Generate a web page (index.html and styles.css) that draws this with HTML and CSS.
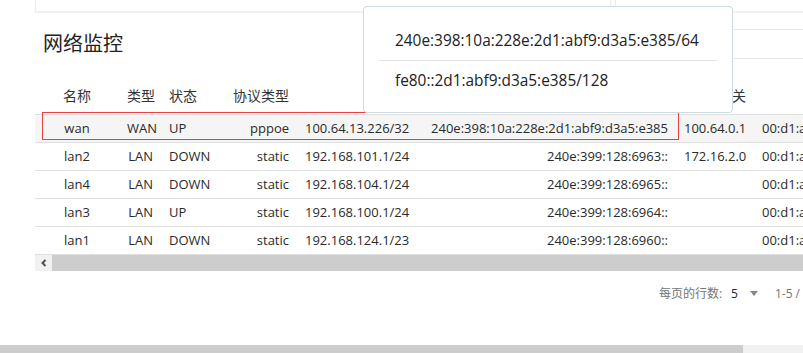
FILE: index.html
```html
<!DOCTYPE html>
<html lang="zh-CN">
<head>
    <meta charset="UTF-8">
    <meta name="viewport" content="width=device-width, initial-scale=1.0">
    <title>网络监控</title>
    <link rel="stylesheet" href="styles.css">
</head>
<body>
    <div class="page">
        <div class="top-cards">
            <div class="top-card top-card-main"></div>
            <div class="top-card top-card-side"></div>
        </div>

        <section class="panel">
            <div class="panel-head">
                <h2 class="panel-title">网络监控</h2>
                <div class="panel-tools"></div>
            </div>

            <div class="table-wrap">
                <table class="net-table">
                    <colgroup>
                        <col style="width:84px">
                        <col style="width:42px">
                        <col style="width:64px">
                        <col style="width:72px">
                        <col style="width:123px">
                        <col style="width:256px">
                        <col style="width:78px">
                        <col style="width:140px">
                    </colgroup>
                    <thead>
                        <tr>
                            <th class="c-center">名称</th>
                            <th class="c-right">类型</th>
                            <th class="c-left">状态</th>
                            <th class="c-right">协议类型</th>
                            <th class="c-right">IPv4</th>
                            <th class="c-right">IPv6</th>
                            <th class="c-right">网关</th>
                            <th class="c-right">MAC</th>
                        </tr>
                    </thead>
                    <tbody>
                        <tr class="is-hover">
                            <td class="c-center">wan</td>
                            <td class="c-right">WAN</td>
                            <td class="c-left">UP</td>
                            <td class="c-right">pppoe</td>
                            <td class="c-left">100.64.13.226/32</td>
                            <td class="c-right">240e:398:10a:228e:2d1:abf9:d3a5:e385</td>
                            <td class="c-right">100.64.0.1</td>
                            <td class="c-left">00:d1:a3:6e:12:04</td>
                        </tr>
                        <tr>
                            <td class="c-center">lan2</td>
                            <td class="c-right">LAN</td>
                            <td class="c-left">DOWN</td>
                            <td class="c-right">static</td>
                            <td class="c-left">192.168.101.1/24</td>
                            <td class="c-right">240e:399:128:6963::</td>
                            <td class="c-right">172.16.2.0</td>
                            <td class="c-left">00:d1:a3:6e:12:05</td>
                        </tr>
                        <tr>
                            <td class="c-center">lan4</td>
                            <td class="c-right">LAN</td>
                            <td class="c-left">DOWN</td>
                            <td class="c-right">static</td>
                            <td class="c-left">192.168.104.1/24</td>
                            <td class="c-right">240e:399:128:6965::</td>
                            <td class="c-right"></td>
                            <td class="c-left">00:d1:a3:6e:12:07</td>
                        </tr>
                        <tr>
                            <td class="c-center">lan3</td>
                            <td class="c-right">LAN</td>
                            <td class="c-left">UP</td>
                            <td class="c-right">static</td>
                            <td class="c-left">192.168.100.1/24</td>
                            <td class="c-right">240e:399:128:6964::</td>
                            <td class="c-right"></td>
                            <td class="c-left">00:d1:a3:6e:12:06</td>
                        </tr>
                        <tr>
                            <td class="c-center">lan1</td>
                            <td class="c-right">LAN</td>
                            <td class="c-left">DOWN</td>
                            <td class="c-right">static</td>
                            <td class="c-left">192.168.124.1/23</td>
                            <td class="c-right">240e:399:128:6960::</td>
                            <td class="c-right"></td>
                            <td class="c-left">00:d1:a3:6e:12:03</td>
                        </tr>
                    </tbody>
                </table>
                <div class="hbar">
                    <span class="hbar-btn">
                        <svg width="8" height="8" viewBox="0 0 8 8"><path d="M5.5 1 L2.5 4 L5.5 7" fill="none" stroke="#505050" stroke-width="2"/></svg>
                    </span>
                    <span class="hbar-thumb"></span>
                </div>
            </div>

            <div class="pager">
                <span class="pager-label">每页的行数:</span>
                <span class="pager-select">5<span class="caret"></span></span>
                <span class="pager-range">1-5 / 5</span>
                <span class="pager-btn">
                    <svg width="24" height="24" viewBox="0 0 24 24"><path d="M15 6 L9 12 L15 18" fill="none" stroke="#bbb" stroke-width="2"/></svg>
                </span>
                <span class="pager-btn">
                    <svg width="24" height="24" viewBox="0 0 24 24"><path d="M9 6 L15 12 L9 18" fill="none" stroke="#bbb" stroke-width="2"/></svg>
                </span>
            </div>
        </section>

        <div class="page-scroll"><span class="page-scroll-thumb"></span></div>

        <!-- 选中行标记 -->
        <div class="row-mark"></div>

        <!-- IPv6 地址弹出框 -->
        <ul class="ip-popover">
            <li>240e:398:10a:228e:2d1:abf9:d3a5:e385/64</li>
            <li>fe80::2d1:abf9:d3a5:e385/128</li>
        </ul>
    </div>
</body>
</html>
```

FILE: styles.css
```css
* {
    margin: 0;
    padding: 0;
    box-sizing: border-box;
}
body {
    font-family: "Open Sans", "Noto Sans CJK SC", sans-serif;
    color: #333;
    background-color: #fff;
    overflow: hidden;
}
.page {
    position: relative;
    width: 803px;
    height: 353px;
    display: flex;
    flex-direction: column;
    overflow: hidden;
}

/* 顶部卡片 */
.top-cards {
    flex: none;
    display: flex;
    gap: 4px;
    height: 13px;
    padding-left: 35px;
}
.top-card {
    height: 100%;
    background-color: #fff;
    border-bottom: 2px solid #f0f0f0;
}
.top-card-main {
    flex: none;
    width: 576px;
    border-left: 1px solid #ececec;
    border-right: 1px solid #ececec;
}
.top-card-side {
    flex: 1;
    border-left: 1px solid #ececec;
}

/* 面板 */
.panel {
    flex: none;
    width: 859px;
    margin-left: 35px;
}
.panel-head {
    display: flex;
    height: 30px;
    margin-top: 16px;
}
.panel-title {
    padding-left: 8px;
    font-size: 20px;
    font-weight: 400;
    line-height: 30px;
    color: #222;
}
.panel-tools {
    margin-left: auto;
    width: 200px;
    height: 30px;
    border-top: 1px solid #e6e6e6;
    border-bottom: 1px solid #e6e6e6;
}

/* 表格 */
.table-wrap {
    margin-top: 22px;
}
.net-table {
    width: 859px;
    table-layout: fixed;
    border-collapse: separate;
    border-spacing: 0;
    font-size: 13px;
}
.net-table th {
    height: 34px;
    padding: 0 8px 5px;
    font-size: 14px;
    font-weight: 400;
    color: #333;
    border-bottom: 1px solid #e0e0e0;
    white-space: nowrap;
    overflow: hidden;
}
.net-table td {
    height: 28px;
    padding: 0 8px;
    line-height: 27px;
    color: #2a2a2a;
    border-bottom: 1px solid #e0e0e0;
    white-space: nowrap;
    overflow: hidden;
}
.net-table tr.is-hover td {
    background-color: #f5f5f5;
}
.c-center { text-align: center; }
.c-right { text-align: right; }
.c-left { text-align: left; }

.hbar {
    display: flex;
    height: 16px;
}
.hbar-btn {
    width: 17px;
    display: flex;
    align-items: center;
    justify-content: center;
    background-color: #f1f1f1;
}
.hbar-thumb {
    flex: 1;
    background-color: #cdcdcd;
}

/* 分页 */
.pager {
    display: flex;
    align-items: center;
    justify-content: flex-end;
    height: 44px;
    padding-right: 4px;
    font-size: 12px;
    color: #757575;
}
.pager-label {
    margin-right: 9px;
}
.pager-select {
    display: flex;
    align-items: center;
    color: #222;
}
.caret {
    width: 0;
    height: 0;
    margin-left: 12px;
    border-left: 4px solid transparent;
    border-right: 4px solid transparent;
    border-top: 5px solid #888;
}
.pager-range {
    margin-left: 17px;
}
.pager-btn {
    display: flex;
    margin-left: 16px;
}

/* 浏览器滚动条 */
.page-scroll {
    flex: none;
    display: flex;
    height: 8px;
    margin-top: auto;
    background-color: #f1f1f1;
}
.page-scroll-thumb {
    width: 743px;
    background-color: #cdcdcd;
}

/* 覆盖层 */
.row-mark {
    position: absolute;
    left: 42px;
    top: 112px;
    width: 637px;
    height: 28px;
    border: 1px solid #e84040;
}
.ip-popover {
    position: absolute;
    left: 363px;
    top: 6px;
    width: 370px;
    height: 107px;
    padding: 14px 15px 0;
    list-style: none;
    font-size: 15.4px;
    color: #222;
    background-color: #fff;
    border: 1px solid #cfdbe3;
    border-radius: 4px;
}
.ip-popover li {
    height: 40px;
    padding-left: 16px;
    line-height: 39px;
    border-bottom: 1px solid #dde3e7;
}
.ip-popover li:last-child {
    border-bottom: none;
}
```
